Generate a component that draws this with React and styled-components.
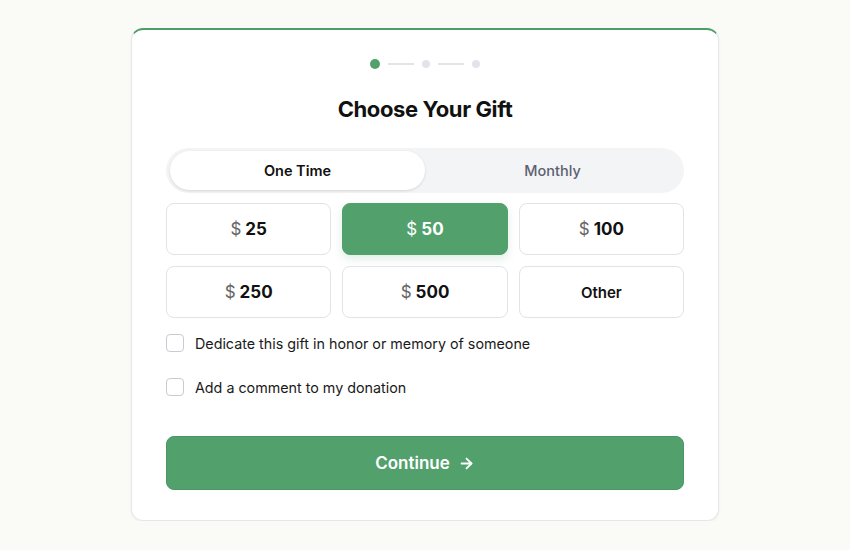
import React, { useState } from 'react'
import styled, { createGlobalStyle } from 'styled-components'
import { ArrowRight } from 'lucide-react'

const Global = createGlobalStyle`
  body {
    margin: 0;
    background: #fafaf6;
    font-family: Inter, "Noto Sans", sans-serif;
  }
`

const Page = styled.div`
  display: flex;
  justify-content: center;
  padding-top: 28px;
`

const Card = styled.div`
  width: 588px;
  box-sizing: border-box;
  background: #fff;
  border: 1px solid #e5e7eb;
  border-top: 2px solid #4f9d69;
  border-radius: 12px;
  padding: 27px 34px 30px;
  box-shadow: 0 1px 3px rgba(0, 0, 0, 0.05);
`

const Steps = styled.div`
  display: flex;
  align-items: center;
  justify-content: center;
  gap: 4px;
  height: 14px;
`

const Dot = styled.span`
  width: ${p => (p.$active ? 10 : 8)}px;
  height: ${p => (p.$active ? 10 : 8)}px;
  border-radius: 50%;
  background: ${p => (p.$active ? '#52a16d' : '#e2e4ea')};
`

const Line = styled.span`
  width: 26px;
  height: 2px;
  background: #e2e4ea;
  margin: 0 4px;
`

const Title = styled.h1`
  margin: 25px 0 26px;
  text-align: center;
  font-size: 22px;
  font-weight: 700;
  letter-spacing: -0.4px;
  color: #111;
`

const Toggle = styled.div`
  display: grid;
  grid-template-columns: 1fr 1fr;
  background: #f3f4f6;
  border-radius: 999px;
  padding: 3px 4px;
  height: 45px;
  box-sizing: border-box;
`

const ToggleBtn = styled.button`
  border: none;
  border-radius: 999px;
  font-family: inherit;
  font-size: 14.5px;
  cursor: pointer;
  background: ${p => (p.$active ? '#fff' : 'transparent')};
  color: ${p => (p.$active ? '#111' : '#5b6170')};
  font-weight: ${p => (p.$active ? 600 : 500)};
  box-shadow: ${p => (p.$active ? '0 1px 3px rgba(0,0,0,0.12)' : 'none')};
`

const Amounts = styled.div`
  display: grid;
  grid-template-columns: repeat(3, 1fr);
  gap: 11px;
  margin-top: 10px;
`

const Amount = styled.button`
  height: 52px;
  border-radius: 8px;
  font-family: inherit;
  font-size: 17px;
  font-weight: 700;
  cursor: pointer;
  border: 1.5px solid ${p => (p.$active ? '#52a16d' : '#e2e3e8')};
  background: ${p => (p.$active ? '#52a16d' : '#fff')};
  color: ${p => (p.$active ? '#fff' : '#111')};
  box-shadow: ${p => (p.$active ? '0 4px 10px rgba(82,161,109,0.18)' : 'none')};
  ${p => p.$small && 'font-size: 15px; font-weight: 600;'}
`

const Currency = styled.span`
  font-weight: 400;
  margin-right: 4px;
  color: ${p => (p.$active ? '#fff' : '#666')};
`

const Options = styled.div`
  display: flex;
  flex-direction: column;
  gap: 26px;
  margin-top: 16px;
`

const Check = styled.label`
  display: flex;
  align-items: center;
  gap: 11px;
  font-size: 14.3px;
  color: #1a1a1a;
  cursor: pointer;
`

const Box = styled.span`
  width: 18px;
  height: 18px;
  box-sizing: border-box;
  border: 1.5px solid #c9cbd1;
  border-radius: 4px;
  background: ${p => (p.$on ? '#52a16d' : '#fff')};
`

const Continue = styled.button`
  margin-top: 40px;
  width: 100%;
  height: 54px;
  border: 1px solid #4a9763;
  border-radius: 8px;
  background: #52a16d;
  color: #fff;
  font-family: inherit;
  font-size: 17px;
  font-weight: 600;
  display: flex;
  align-items: center;
  justify-content: center;
  gap: 8px;
  cursor: pointer;
`

const amounts = [25, 50, 100, 250, 500]

export default function App() {
  const [freq, setFreq] = useState('once')
  const [amount, setAmount] = useState(50)
  const [checks, setChecks] = useState({ dedicate: false, comment: false })

  const toggle = k => setChecks({ ...checks, [k]: !checks[k] })

  return (
    <>
      <Global />
      <Page>
        <Card>
          <Steps>
            <Dot $active />
            <Line />
            <Dot />
            <Line />
            <Dot />
          </Steps>
          <Title>Choose Your Gift</Title>
          <Toggle>
            <ToggleBtn $active={freq === 'once'} onClick={() => setFreq('once')}>One Time</ToggleBtn>
            <ToggleBtn $active={freq === 'monthly'} onClick={() => setFreq('monthly')}>Monthly</ToggleBtn>
          </Toggle>
          <Amounts>
            {amounts.map(a => (
              <Amount key={a} $active={amount === a} onClick={() => setAmount(a)}>
                <Currency $active={amount === a}>$</Currency>{a}
              </Amount>
            ))}
            <Amount $small $active={amount === 'other'} onClick={() => setAmount('other')}>Other</Amount>
          </Amounts>
          <Options>
            <Check onClick={() => toggle('dedicate')}>
              <Box $on={checks.dedicate} />
              Dedicate this gift in honor or memory of someone
            </Check>
            <Check onClick={() => toggle('comment')}>
              <Box $on={checks.comment} />
              Add a comment to my donation
            </Check>
          </Options>
          <Continue>
            Continue <ArrowRight size={17} strokeWidth={2.5} />
          </Continue>
        </Card>
      </Page>
    </>
  )
}
